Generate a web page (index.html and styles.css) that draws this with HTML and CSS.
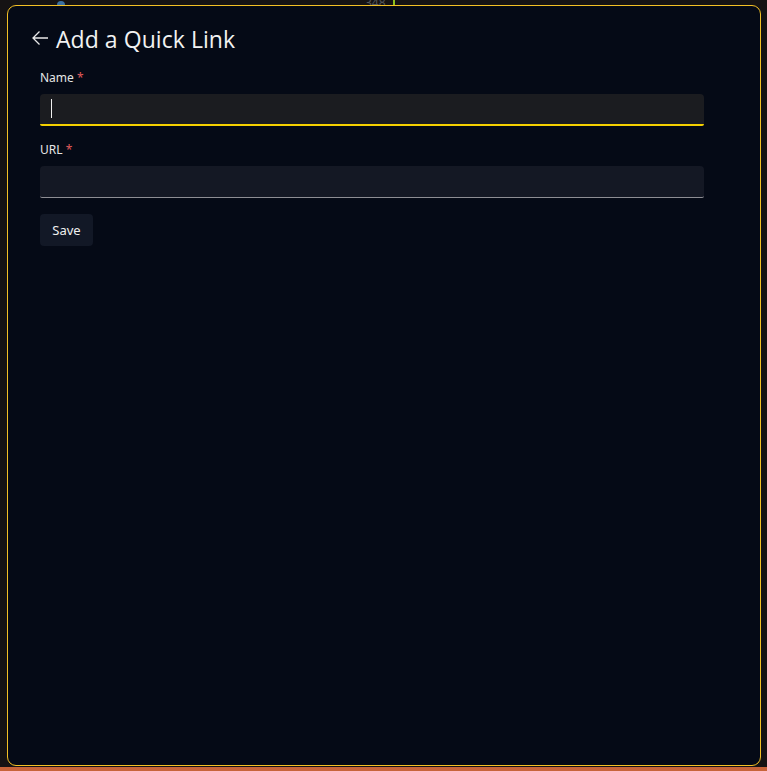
FILE: index.html
```html
<!DOCTYPE html>
<html>
<head>
<meta charset="utf-8">
<link rel="stylesheet" href="styles.css">
</head>
<body>
<div class="backdrop">
  <div class="peek">
    <span class="peek-icon"></span>
    <span class="peek-num">348</span>
    <span class="peek-bar"></span>
  </div>
  <div class="dialog">
    <div class="header">
      <svg class="back" width="18" height="18" viewBox="0 0 18 18" fill="none" stroke="#e8e8e8" stroke-width="1.3">
        <path d="M17 9H2M8.5 2.5L2 9l6.5 6.5"/>
      </svg>
      <h1 class="title">Add a Quick Link</h1>
    </div>
    <form class="form">
      <div class="field">
        <label class="label">Name <span class="req">*</span></label>
        <div class="input input-focus"><span class="caret"></span></div>
      </div>
      <div class="field">
        <label class="label">URL <span class="req">*</span></label>
        <div class="input input-plain"></div>
      </div>
      <button type="button" class="save">Save</button>
    </form>
  </div>
  <div class="orange"></div>
</div>
</body>
</html>
```
FILE: styles.css
```css
* { box-sizing: border-box; }
html, body { margin: 0; padding: 0; }
body {
  width: 767px;
  height: 771px;
  overflow: hidden;
  background: #151314;
  font-family: "Noto Sans", "Open Sans", sans-serif;
}
.backdrop {
  position: relative;
  width: 767px;
  height: 771px;
  padding-top: 5px;
  padding-left: 7px;
}
.peek {
  position: absolute;
  top: 0;
  left: 0;
  width: 767px;
  height: 6px;
  overflow: hidden;
}
.peek-icon {
  position: absolute;
  left: 57px;
  top: 1px;
  width: 8px;
  height: 8px;
  border-radius: 50%;
  background: #3a6fa0;
}
.peek-num {
  position: absolute;
  left: 365px;
  top: -4px;
  font-size: 12px;
  line-height: 14px;
  color: #55575c;
}
.peek-bar {
  position: absolute;
  left: 393px;
  top: 0;
  width: 2px;
  height: 6px;
  background: #8fbf1c;
}
.dialog {
  position: relative;
  width: 754px;
  height: 761px;
  border: 1px solid #f4c125;
  border-radius: 9px;
  background: #050a16;
}
.header {
  display: flex;
  align-items: center;
  gap: 7px;
  padding: 17px 0 0 23px;
  height: 49px;
}
.back { display: block; margin-top: -2px; }
.title {
  margin: 0;
  font-family: "Open Sans", "Noto Sans", sans-serif;
  font-weight: 400;
  font-size: 23px;
  line-height: 30px;
  color: #f2f2f2;
  letter-spacing: 0.05px;
}
.form {
  padding: 15px 55px 0 32px;
  display: flex;
  flex-direction: column;
  align-items: flex-start;
}
.field {
  width: 100%;
  margin-bottom: 16px;
}
.label {
  display: block;
  font-size: 12px;
  color: #e6e6e6;
  line-height: 16px;
  margin-bottom: 8px;
}
.req { color: #e15b5b; }
.input {
  width: 664px;
  height: 32px;
  border-radius: 4px;
  position: relative;
}
.input-focus {
  background: #1b1c20;
  border-bottom: 2px solid #f5d000;
  border-radius: 4px 4px 2px 2px;
}
.input-plain {
  background: #141824;
  border-bottom: 1px solid #8e8e94;
  border-radius: 4px 4px 2px 2px;
}
.caret {
  position: absolute;
  left: 11px;
  top: 5px;
  width: 1px;
  height: 19px;
  background: #f0f0f0;
}
.save {
  width: 53px;
  height: 32px;
  border: none;
  border-radius: 4px;
  background: #121826;
  color: #f0f0f0;
  font-family: "Noto Sans", "Open Sans", sans-serif;
  font-size: 13px;
  padding: 0;
}
.orange {
  position: absolute;
  left: 0;
  bottom: 0;
  width: 767px;
  height: 4px;
  background: #c8643a;
}
```
